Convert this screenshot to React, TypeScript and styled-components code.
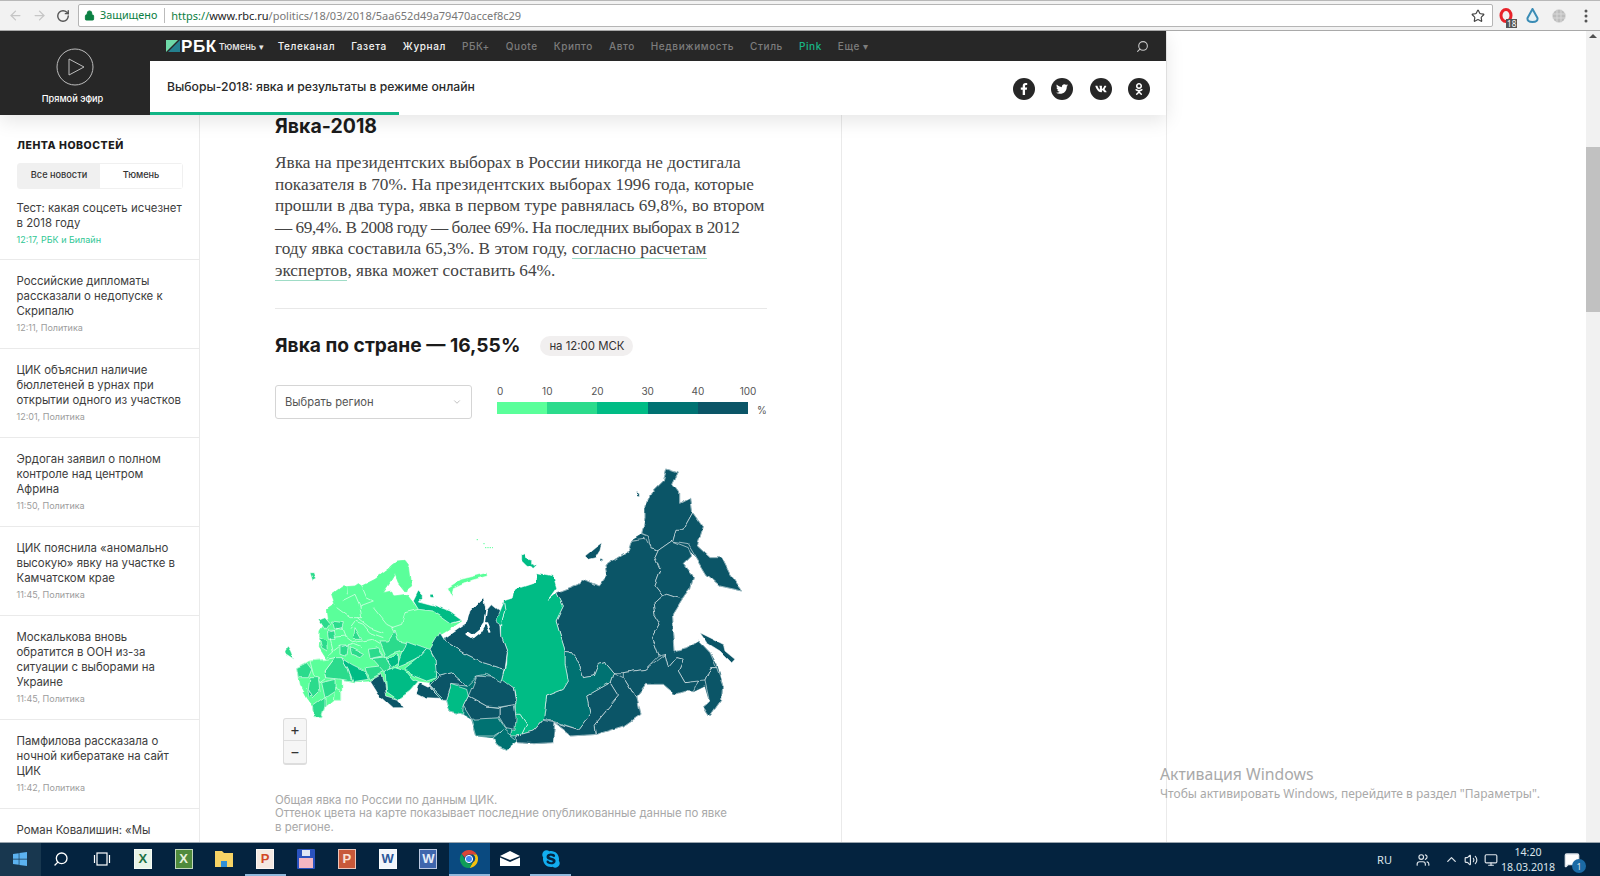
import styled, { createGlobalStyle } from "styled-components";
import { ArrowLeft, ArrowRight, RotateCw, Lock, Star, Search, ChevronDown, ChevronUp, Users, Volume2, Monitor, MessageSquare } from "lucide-react";
import { FaFacebookF, FaTwitter, FaVk, FaOdnoklassniki, FaWindows, FaSkype } from "react-icons/fa";

const SANS = `Inter, "Liberation Sans", sans-serif`;
const UI = `"Noto Sans", "Open Sans", sans-serif`;
const PALETTE = ["#5aff9a", "#2bdb8c", "#00bc85", "#007272", "#0b5567"];

const GlobalStyle = createGlobalStyle`
  html, body { margin: 0; padding: 0; background: #fff; }
  * { box-sizing: border-box; }
`;

const Screen = styled.div`
  width: 1600px;
  height: 876px;
  display: flex;
  flex-direction: column;
  overflow: hidden;
  position: relative;
  font-family: ${SANS};
`;

/* browser toolbar */
const BrowserBar = styled.div`
  height: 31px;
  flex: none;
  display: flex;
  align-items: center;
  background: #f2f2f2;
  border-top: 1px solid #b8b8b8;
  border-bottom: 1px solid #a9a9a9;
  padding: 0 1px 0 3px;
  color: #5a5a5a;
`;

const NavButton = styled.span<{ $dim?: boolean }>`
  width: 24px;
  display: flex;
  justify-content: center;
  color: ${(p) => (p.$dim ? "#c6c6c6" : "#555")};
`;

const Omnibox = styled.div`
  flex: 1;
  height: 23px;
  margin-left: 3px;
  background: #fff;
  border: 1px solid #b5b5b5;
  border-radius: 2px;
  display: flex;
  align-items: center;
  padding: 0 7px 0 5px;
  font: 10.8px/1 ${UI};
  white-space: nowrap;
`;

const Secure = styled.span`
  color: #0b8043;
  margin-left: 5px;
`;

const Divider = styled.span`
  width: 1px;
  height: 15px;
  background: #bbb;
  margin: 0 6px 0 7px;
`;

const Url = styled.span`
  flex: 1;
  color: #777;
  font-size: 11px;
  b { font-weight: 400; color: #0b8043; }
  i { font-style: normal; color: #222; }
`;

const Extension = styled.span`
  width: 26.6px;
  height: 18px;
  display: flex;
  justify-content: center;
  align-items: center;
  position: relative;
`;

const ExtBadge = styled.span`
  position: absolute;
  right: 2px;
  bottom: -3px;
  background: #555;
  color: #fff;
  font: 8px/9px ${UI};
  padding: 0 1px;
`;

/* page body and its scrollbar */
const Viewport = styled.div`
  flex: 1;
  min-height: 0;
  display: flex;
`;

const Page = styled.div`
  flex: 1;
  min-width: 0;
  overflow: hidden;
`;

const Scrollbar = styled.div`
  width: 14px;
  flex: none;
  background: #f1f1f1;
  display: flex;
  flex-direction: column;
  align-items: center;
  padding-top: 3px;
  color: #505050;
`;

const ScrollArrow = styled.span`
  width: 0;
  height: 0;
  border: 4px solid transparent;
  border-top: 0;
  border-bottom: 4px solid #505050;
`;

const Thumb = styled.div`
  width: 100%;
  height: 165px;
  margin-top: 109px;
  background: #c1c1c1;
`;

const Column = styled.div`
  width: 1167px;
  height: 100%;
  display: flex;
  flex-direction: column;
  border-right: 1px solid #eaeaea;
`;

const Header = styled.header`
  height: 84px;
  flex: none;
  display: flex;
  position: relative;
  z-index: 2;
  box-shadow: 0 6px 18px rgba(0, 0, 0, 0.1);
`;

const LiveBlock = styled.div`
  width: 150px;
  flex: none;
  background: #272727;
  color: #fff;
  display: flex;
  flex-direction: column;
  align-items: center;
  padding: 17px 1px 0 0;
  font-size: 9.2px;
  font-weight: 500;
  gap: 7px;
`;

const LiveLabel = styled.span`
  margin-right: 4px;
`;

const HeaderMain = styled.div`
  flex: 1;
  display: flex;
  flex-direction: column;
`;

const TopNav = styled.nav`
  height: 30px;
  background: #272727;
  display: flex;
  align-items: center;
  padding: 0 17px 0 16px;
  font-size: 10px;
  letter-spacing: 0.6px;
  white-space: nowrap;
`;

const Logo = styled.span`
  display: flex;
  align-items: center;
  gap: 1px;
  color: #fff;
  font: 700 17px/1 "Liberation Sans", sans-serif;
  margin-right: 2px;
`;

const NavItem = styled.a<{ $tone?: "main" | "muted" | "pink" }>`
  margin-right: 16px;
  font-weight: 500;
  color: ${(p) => (p.$tone === "main" ? "#f2f2f2" : p.$tone === "pink" ? "#18b887" : "#7d7d7d")};
`;

const City = styled.span`
  color: #e8e8e8;
  font-size: 9.4px;
  letter-spacing: 0;
  font-weight: 500;
  margin-right: 14px;
`;

const NavSearch = styled.span`
  margin-left: auto;
  color: #c8c8c8;
  display: flex;
  transform: scaleX(-1);
`;

const SubBar = styled.div`
  flex: 1;
  background: #fff;
  display: flex;
  align-items: center;
  justify-content: space-between;
  padding: 0 16px 0 17px;
  position: relative;
  font-size: 12.2px;
  font-weight: 500;
  color: #2a2a2a;
`;

const SubTitle = styled.span`
  margin-bottom: 3px;
`;

const Progress = styled.span`
  position: absolute;
  left: 0;
  bottom: 0;
  width: 249px;
  height: 3px;
  background: #10b585;
`;

const Socials = styled.div`
  display: flex;
  gap: 16.5px;
  margin-top: 1px;
`;

const SocialIcon = styled.span`
  width: 22px;
  height: 22px;
  border-radius: 50%;
  background: #272727;
  color: #fff;
  display: flex;
  align-items: center;
  justify-content: center;
  font-size: 12px;
`;

const Body = styled.div`
  flex: 1;
  min-height: 0;
  display: flex;
  overflow: hidden;
`;

/* news feed */
const Feed = styled.aside`
  width: 200px;
  flex: none;
  border-right: 1px solid #eaeaea;
  padding-top: 24px;
  overflow: hidden;
`;

const FeedTitle = styled.div`
  font-size: 10.5px;
  font-weight: 800;
  letter-spacing: 0.55px;
  line-height: 13px;
  color: #1c1c1c;
  padding-left: 17px;
`;

const Tabs = styled.div`
  display: flex;
  margin: 11px 0 0 17px;
  width: 166px;
  height: 26px;
  border: 1px solid #f0f0f0;
  border-radius: 3px;
  font-size: 9.2px;
  font-weight: 500;
  color: #333;
`;

const Tab = styled.span<{ $active?: boolean }>`
  width: 50%;
  display: flex;
  align-items: center;
  justify-content: center;
  padding-bottom: 3px;
  background: ${(p) => (p.$active ? "#f0f0f0" : "#fff")};
`;

const NewsItem = styled.div<{ $first?: boolean }>`
  padding: ${(p) => (p.$first ? "12px 8px 13px" : "14px 8px 14px")} 16.5px;
  padding-right: 8px;
  border-bottom: 1px solid #eaeaea;
  font-size: 11.4px;
  line-height: 15px;
  color: #3d3d3d;
`;

const NewsLine = styled.span`
  display: block;
  white-space: nowrap;
`;

const NewsMeta = styled.div<{ $accent?: boolean }>`
  font-size: 9px;
  line-height: 12px;
  margin-top: 3px;
  color: ${(p) => (p.$accent ? "#30c795" : "#9c9c9c")};
`;

/* article */
const Article = styled.main`
  width: 642px;
  flex: none;
  border-right: 1px solid #eaeaea;
  padding: 0 74px 0 75px;
`;

const SectionTitle = styled.h2`
  margin: 0;
  padding-top: 1px;
  font-size: 19.5px;
  line-height: 21px;
  font-weight: 700;
  color: #1b1b1b;
`;

const Lead = styled.p`
  margin: 15px 0 0;
  font: 17.25px/21.6px "Liberation Serif", serif;
  color: #444;
  white-space: nowrap;
  padding-bottom: 26px;
  border-bottom: 1px solid #e8e8e8;
  a { color: inherit; border-bottom: 1px solid #9fdcc6; }
`;

const LeadLine = styled.span<{ $tracking?: number }>`
  display: block;
  letter-spacing: ${(p) => p.$tracking ?? 0}px;
`;

const TurnoutRow = styled.div`
  display: flex;
  align-items: center;
  margin-top: 24.5px;
  gap: 20px;
`;

const TurnoutTitle = styled.h3`
  margin: 0;
  font-size: 19.2px;
  line-height: 24px;
  font-weight: 700;
  color: #1b1b1b;
  white-space: nowrap;
`;

const TimePill = styled.span`
  height: 20px;
  margin-top: 2px;
  padding: 0 9px;
  border-radius: 10px;
  background: #f1efef;
  color: #333;
  display: flex;
  align-items: center;
  font-size: 11.4px;
`;

const Controls = styled.div`
  display: flex;
  align-items: flex-start;
  margin-top: 27.5px;
  gap: 25px;
`;

const RegionSelect = styled.div`
  width: 197px;
  flex: none;
  height: 34px;
  border: 1px solid #d5d5d5;
  border-radius: 3px;
  display: flex;
  align-items: center;
  justify-content: space-between;
  padding: 0 9px;
  font-size: 11.2px;
  color: #555;
`;

const Legend = styled.div`
  width: 270px;
  flex: none;
  display: grid;
  grid-template-columns: repeat(5, 50.2px) 1fr;
  grid-template-rows: 17px 12px;
  font-size: 10px;
  color: #555;
  line-height: 12px;
`;

const LegendTicks = styled.div`
  grid-column: 1 / 7;
  display: flex;
  white-space: nowrap;
  margin-left: -25px;
`;

const LegendTick = styled.span<{ $first?: boolean }>`
  width: 50.2px;
  flex: none;
  text-align: ${(p) => (p.$first ? "right" : "center")};
  padding-right: ${(p) => (p.$first ? "19px" : "0")};
`;

const LegendSwatch = styled.span<{ $level: number }>`
  background: ${(p) => PALETTE[p.$level]};
`;

const LegendUnit = styled.span`
  padding-left: 9px;
  padding-top: 2px;
`;

const MapBox = styled.div`
  margin: 32px 0 0 -5px;
  width: 500px;
  height: 320px;
  position: relative;
`;

const RegionShape = styled.path<{ $level: number; $flat?: boolean }>`
  fill: ${(p) => PALETTE[p.$level]};
  stroke: ${(p) => (p.$flat ? PALETTE[p.$level] : "rgba(255, 255, 255, 0.78)")};
  stroke-width: 2.2;
  stroke-linejoin: round;
`;

const Zoom = styled.div`
  position: absolute;
  left: 13px;
  top: 267px;
  width: 24px;
  height: 47px;
  border: 1px solid #ddd;
  border-bottom-width: 2px;
  border-radius: 3px;
  background: #f6f6f6;
  display: flex;
  flex-direction: column;
  font: 15px/1 ${SANS};
  color: #333;
`;

const ZoomStep = styled.span`
  flex: 1;
  display: flex;
  align-items: center;
  justify-content: center;
  & + & { border-top: 1px solid #ddd; }
`;

const Caption = styled.p`
  margin: 23.5px 0 0;
  font-size: 11.43px;
  line-height: 13.4px;
  color: #a8a8a8;
  white-space: nowrap;
`;

/* system overlay and taskbar */
const Watermark = styled.div`
  position: absolute;
  left: 1160px;
  top: 764px;
  font: 12px/20px ${UI};
  color: #a9a9a9;
  white-space: nowrap;
  pointer-events: none;
  span { display: block; font-size: 15.8px; line-height: 20px; }
`;

const Taskbar = styled.footer`
  height: 34px;
  flex: none;
  background: #04233f;
  border-top: 1px solid #9aa5ae;
  display: flex;
  align-items: stretch;
  color: #fff;
`;

const TaskTile = styled.span<{ $start?: boolean; $active?: boolean; $open?: boolean }>`
  width: 40.8px;
  display: flex;
  align-items: center;
  justify-content: center;
  background: ${(p) => (p.$start ? "#18374f" : p.$active ? "#0a4a80" : "transparent")};
  border-bottom: 2px solid ${(p) => (p.$active || p.$open ? "#8fb8dc" : "transparent")};
`;

const DocIcon = styled.span<{ $bg: string; $fg?: string }>`
  width: 18px;
  height: 20px;
  background: ${(p) => p.$bg};
  color: ${(p) => p.$fg ?? "#fff"};
  display: flex;
  align-items: center;
  justify-content: center;
  font: 700 13px/1 "Liberation Sans", sans-serif;
  border: 1px solid rgba(255, 255, 255, 0.65);
`;

const Tray = styled.div`
  margin-left: auto;
  display: flex;
  align-items: center;
  font: 11px/1 ${UI};
  color: #dde4ea;
`;

const TrayLabel = styled.span`
  margin-right: 21px;
`;

const TraySlot = styled.span<{ $gap?: boolean }>`
  width: 20px;
  display: flex;
  justify-content: center;
  margin-left: ${(p) => (p.$gap ? "8px" : "0")};
`;

const Clock = styled.div`
  width: 54px;
  text-align: center;
  font-size: 10.6px;
  line-height: 15px;
`;

const Notify = styled.span`
  width: 34px;
  height: 100%;
  display: flex;
  align-items: center;
  justify-content: center;
  position: relative;
  margin-right: 11px;
`;

const NotifyCount = styled.span`
  position: absolute;
  right: 3px;
  bottom: 3px;
  width: 14px;
  height: 14px;
  border-radius: 50%;
  background: #1b6aa5;
  font-size: 9px;
  display: flex;
  align-items: center;
  justify-content: center;
`;

const news: { lines: string[]; meta?: string }[] = [
  { lines: ["Российские дипломаты", "рассказали о недопуске к", "Скрипалю"], meta: "12:11, Политика" },
  { lines: ["ЦИК объяснил наличие", "бюллетеней в урнах при", "открытии одного из участков"], meta: "12:01, Политика" },
  { lines: ["Эрдоган заявил о полном", "контроле над центром", "Африна"], meta: "11:50, Политика" },
  { lines: ["ЦИК пояснила «аномально", "высокую» явку на участке в", "Камчатском крае"], meta: "11:45, Политика" },
  { lines: ["Москалькова вновь", "обратится в ООН из-за", "ситуации с выборами на", "Украине"], meta: "11:45, Политика" },
  { lines: ["Памфилова рассказала о", "ночной кибератаке на сайт", "ЦИК"], meta: "11:42, Политика" },
  { lines: ["Роман Ковалишин: «Мы"] },
];

const navItems: { label: string; tone: "main" | "muted" | "pink" }[] = [
  { label: "Телеканал", tone: "main" },
  { label: "Газета", tone: "main" },
  { label: "Журнал", tone: "main" },
  { label: "РБК+", tone: "muted" },
  { label: "Quote", tone: "muted" },
  { label: "Крипто", tone: "muted" },
  { label: "Авто", tone: "muted" },
  { label: "Недвижимость", tone: "muted" },
  { label: "Стиль", tone: "muted" },
  { label: "Pink", tone: "pink" },
  { label: "Еще ▾", tone: "muted" },
];

// solid land under the subjects so that no seams show between them
const landmass: [number, string][] = [
  [4, "M860,425 L925,400 L940,385 L985,405 L1010,372 L1005,345 L1040,322 L1075,300 L1085,268 L1115,250 L1125,200 L1125,165 L1150,120 L1180,90 L1190,54 L1225,66 L1208,100 L1226,125 L1226,160 L1262,142 L1268,185 L1300,230 L1282,285 L1320,320 L1355,320 L1380,370 L1418,420 L1350,405 L1310,370 L1280,320 L1255,290 L1265,315 L1240,340 L1270,380 L1262,410 L1235,445 L1207,490 L1215,600 L1250,590 L1285,568 L1320,605 L1340,640 L1358,700 L1355,745 L1320,795 L1300,765 L1318,750 L1305,705 L1270,722 L1250,720 L1215,730 L1180,700 L1130,700 L1098,740 L1110,790 L1060,825 L980,850 L905,855 L855,815 L848,875 L790,878 L745,875 L735,855 L790,840 L885,640 Z"],
  [3, "M480,595 L525,560 L700,560 L700,700 L738,745 L740,870 L710,895 L680,880 L670,860 L620,855 L605,805 L578,790 L540,780 L530,745 L510,742 L480,705 Z"],
  [0, "M185,430 L215,408 L255,405 L265,398 L275,405 L315,385 L360,352 L365,345 L385,330 L405,328 L418,345 L425,405 L405,420 L385,395 L375,370 L360,395 L340,425 L365,420 L372,435 L410,430 L445,475 L490,480 L540,515 L575,510 L530,540 L505,555 L480,595 L495,625 L500,680 L485,695 L445,690 L420,720 L385,745 L350,735 L345,700 L335,670 L300,690 L250,692 L215,685 L215,745 L190,745 L165,765 L155,800 L135,800 L130,765 L110,740 L88,700 L80,650 L110,635 L120,630 L170,625 L148,590 L150,540 L175,500 L172,475 L195,460 Z"],
];

// federal subjects, the first value is the turnout band
const regions: [number, string][] = [
  // far east
  [4, "M860,425 L925,400 L940,385 L985,405 L1010,372 L1005,345 L1040,322 L1075,300 L1085,268 L1125,262 L1140,290 L1165,298 L1155,320 L1172,360 L1155,405 L1178,435 L1150,460 L1155,490 L1170,515 L1145,560 L1165,615 L1125,655 L1060,665 L1030,665 L1005,635 L985,640 L970,675 L940,680 L925,630 L900,600 L885,598 L870,550 L858,510 L880,465 Z"],
  [4, "M1190,54 L1225,66 L1208,100 L1226,125 L1226,160 L1262,142 L1268,185 L1240,235 L1215,235 L1205,270 L1165,298 L1140,290 L1135,258 L1115,250 L1125,200 L1125,165 L1150,120 L1180,90 Z"],
  [4, "M1268,185 L1300,230 L1282,285 L1320,320 L1355,320 L1380,370 L1418,420 L1350,405 L1310,370 L1280,320 L1255,278 L1205,270 L1215,235 L1240,235 Z"],
  [4, "M1205,270 L1255,290 L1265,315 L1240,340 L1270,380 L1262,410 L1235,445 L1190,430 L1178,435 L1155,405 L1172,360 L1155,320 L1165,298 Z"],
  [4, "M1178,435 L1190,430 L1235,445 L1207,490 L1215,600 L1250,590 L1285,568 L1320,605 L1340,650 L1322,650 L1305,690 L1245,695 L1225,660 L1240,625 L1220,620 L1195,650 L1185,610 L1165,615 L1145,560 L1170,515 L1155,490 L1150,460 Z"],
  [4, "M1322,650 L1340,650 L1358,700 L1355,745 L1320,795 L1300,765 L1318,750 L1305,690 Z"],
  [4, "M1060,665 L1125,655 L1185,610 L1195,650 L1220,620 L1240,625 L1225,660 L1245,695 L1285,690 L1270,722 L1250,720 L1215,730 L1180,700 L1130,700 L1098,740 L1060,680 Z"],
  [4, "M1030,665 L1060,680 L1098,740 L1110,790 L1060,825 L980,850 L975,820 L1045,735 L1020,695 Z"],
  [4, "M950,735 L1020,695 L1045,735 L975,820 L978,850 L905,855 L855,815 L925,835 L960,790 Z"],
  [3, "M885,598 L900,600 L925,630 L940,680 L970,675 L985,640 L1005,635 L1030,665 L1020,695 L950,735 L960,790 L925,835 L855,812 L820,805 L830,735 L880,715 L895,690 L885,640 Z"],
  [4, "M1290,545 L1360,580 L1365,600 L1395,625 L1385,635 L1350,600 L1310,575 Z"],
  [4, "M1100,120 L1108,125 L1108,138 L1100,135 Z"],
  [4, "M945,315 L975,290 L995,275 L990,295 L975,320 L955,325 Z"],
  [4, "M990,322 L1000,325 L990,332 Z"],
  // siberia
  [2, "M700,450 L730,440 L735,415 L795,395 L800,365 L850,375 L860,410 L835,445 L860,425 L880,465 L858,510 L870,550 L885,598 L885,640 L895,690 L880,715 L830,735 L820,805 L790,840 L755,850 L770,820 L750,790 L735,790 L738,745 L730,710 L695,695 L710,640 L712,605 L695,560 L695,510 L705,480 Z"],
  [2, "M755,310 L765,305 L770,320 L785,325 L785,340 L800,345 L790,355 L770,345 L755,330 Z"],
  [4, "M735,855 L790,840 L820,808 L855,815 L848,875 L790,878 L745,875 Z"],
  [2, "M735,790 L750,790 L770,820 L755,850 L722,852 Z"],
  [3, "M605,800 L685,800 L708,832 L670,855 L620,855 Z"],
  [3, "M670,860 L700,835 L742,870 L710,895 L680,880 Z"],
  [4, "M690,770 L732,760 L738,800 L735,835 L708,830 L690,800 Z"],
  [4, "M595,735 L650,765 L690,770 L690,800 L605,805 L580,765 Z"],
  [4, "M620,675 L690,680 L730,710 L738,760 L690,768 L650,765 L595,735 L610,700 Z"],
  [2, "M545,700 L590,715 L595,735 L580,765 L578,790 L540,780 L530,745 Z"],
  [4, "M480,705 L510,675 L545,665 L590,705 L545,700 L530,745 L520,745 Z"],
  [3, "M480,595 L510,545 L525,570 L590,610 L640,635 L705,655 L695,695 L650,670 L620,675 L590,705 L545,665 L510,675 L495,660 L495,620 Z"],
  [4, "M525,560 L590,515 L600,480 L640,440 L648,480 L665,460 L690,480 L695,560 L712,605 L705,655 L640,635 L590,610 L525,570 Z"],
  [2, "M675,510 L700,450 L705,480 L695,510 L695,525 Z"],
  // north of the european part
  [2, "M430,450 L445,420 L458,435 L445,450 L490,462 L540,480 L575,505 L540,515 L490,480 L445,475 Z"],
  [0, "M530,410 L570,385 L650,365 L652,375 L590,392 L550,410 L545,440 Z"],
  [2, "M480,430 L492,430 L490,440 L480,438 Z"],
  [1, "M120,365 L130,365 L137,385 L128,390 Z"],
  // volga and urals
  [2, "M410,570 L470,592 L445,620 L405,640 L380,650 L392,615 Z"],
  [2, "M470,592 L480,595 L495,625 L500,680 L470,690 L420,670 L405,652 L445,620 Z"],
  [2, "M345,660 L375,650 L405,660 L425,685 L445,690 L420,720 L385,745 L350,720 Z"],
  [4, "M300,690 L335,670 L345,700 L350,735 L385,745 L398,770 L370,770 L325,730 Z"],
  [4, "M450,695 L480,710 L510,742 L470,740 L440,725 Z"],
  [2, "M215,620 L245,640 L285,660 L295,685 L250,692 L235,655 Z"],
  [1, "M195,620 L215,620 L235,655 L245,690 L215,685 L170,680 L165,660 Z"],
  [1, "M285,650 L330,645 L345,660 L300,685 Z"],
  [1, "M305,620 L345,615 L365,650 L345,665 Z"],
  [1, "M330,570 L355,570 L375,540 L385,570 L410,575 L400,600 L365,610 L350,620 Z"],
  [2, "M350,625 L385,610 L385,635 L365,650 Z"],
  // south
  [1, "M80,650 L110,635 L125,655 L115,680 L85,680 Z"],
  [0, "M120,630 L170,625 L195,620 L165,660 L170,680 L150,695 L130,670 Z"],
  [1, "M120,680 L145,680 L150,720 L130,740 L115,715 Z"],
  [1, "M155,695 L195,685 L195,720 L165,740 Z"],
  [0, "M195,710 L215,720 L215,745 L190,745 Z"],
  [1, "M130,765 L165,740 L165,765 L155,800 L135,800 Z"],
  [1, "M45,600 L55,585 L65,600 L75,625 L45,605 Z"],
  [2, "M110,715 L125,730 L115,740 Z"],
  // centre
  [1, "M145,505 L165,497 L180,515 L165,535 Z"],
  [1, "M185,510 L220,515 L215,535 L190,530 Z"],
  [1, "M172,535 L190,535 L195,565 L175,565 Z"],
  [1, "M147,560 L170,570 L172,600 L155,590 Z"],
  [1, "M255,530 L275,565 L250,565 Z"],
  [1, "M210,585 L235,585 L230,615 L210,610 Z"],
  [1, "M240,590 L280,610 L270,620 L245,610 Z"],
  [1, "M295,595 L325,590 L340,612 L300,620 Z"],
];

// inner borders across the north-west, all one turnout band
const borders = [
  "M215,450 L255,430 L270,465 L310,450",
  "M200,470 L240,500 L262,500 L300,530 L340,545",
  "M310,470 L350,520 L370,530",
  "M270,465 L275,500 L262,500",
  "M230,405 L232,430",
  "M275,405 L290,440 L310,450",
  "M405,485 L395,520 L365,530 L375,550",
  "M445,475 L405,485",
  "M175,540 L215,530 L225,555 L180,560 L190,600 L170,620",
  "M240,530 L255,510 L280,520 L300,545 L340,560",
  "M225,555 L250,575 L305,565 L330,580",
  "M215,590 L250,580 L275,590",
  "M190,600 L210,585",
];

const ChromeIcon = () => (
  <svg width="20" height="20" viewBox="0 0 20 20">
    <path d="M10 1a9 9 0 0 1 7.8 4.5H10a4.5 4.5 0 0 0-4.2 3L2.6 4.8A9 9 0 0 1 10 1z" fill="#db4437" />
    <path d="M17.8 5.5A9 9 0 0 1 10.6 19l3.3-5.6a4.5 4.5 0 0 0 .1-7.9z" fill="#f4c20d" />
    <path d="M2.6 4.8l3.9 6.9a4.5 4.5 0 0 0 6.6 2L10.6 19A9 9 0 0 1 2.6 4.8z" fill="#0f9d58" />
    <circle cx="10" cy="10" r="3.6" fill="#4285f4" stroke="#fff" strokeWidth="1" />
  </svg>
);

const App = () => {
  return (
    <Screen>
      <GlobalStyle />
      <BrowserBar>
        <NavButton $dim><ArrowLeft size={15} /></NavButton>
        <NavButton $dim><ArrowRight size={15} /></NavButton>
        <NavButton><RotateCw size={14} strokeWidth={2.4} /></NavButton>
        <Omnibox>
          <Lock size={11} color="#0b8043" fill="#0b8043" />
          <Secure>Защищено</Secure>
          <Divider />
          <Url><b>https://</b><i>www.rbc.ru</i>/politics/18/03/2018/5aa652d49a79470accef8c29</Url>
          <Star size={14} color="#444" />
        </Omnibox>
        <Extension>
          <svg width="14" height="15" viewBox="0 0 14 15"><ellipse cx="7" cy="7.5" rx="5" ry="6" fill="none" stroke="#e8232a" strokeWidth="3" /></svg>
          <ExtBadge>18</ExtBadge>
        </Extension>
        <Extension>
          <svg width="15" height="16" viewBox="0 0 15 16"><path d="M7.5 1 L12.5 10 Q13 14 7.5 14 Q2 14 2.5 10 Z" fill="#e6f0f4" stroke="#3a8cb5" strokeWidth="2" /></svg>
        </Extension>
        <Extension>
          <svg width="14" height="14" viewBox="0 0 14 14" fill="none">
            <circle cx="7" cy="7" r="6.5" fill="#bdbdbd" />
            <path d="M0.5 5h13M0.5 9h13M5 0.5v13M9 0.5v13" stroke="#d8d8d8" />
          </svg>
        </Extension>
        <Extension>
          <svg width="4" height="14" viewBox="0 0 4 14" fill="#555"><circle cx="2" cy="2" r="1.5" /><circle cx="2" cy="7" r="1.5" /><circle cx="2" cy="12" r="1.5" /></svg>
        </Extension>
      </BrowserBar>

      <Viewport>
        <Page>
          <Column>
            <Header>
              <LiveBlock>
                <svg width="38" height="38" viewBox="0 0 38 38" fill="none" stroke="#bdbdbd" strokeWidth="1">
                  <circle cx="19" cy="19" r="18" />
                  <path d="M13 11 L28 19 L13 27 Z" />
                </svg>
                <LiveLabel>Прямой эфир</LiveLabel>
              </LiveBlock>
              <HeaderMain>
                <TopNav>
                  <Logo>
                    <svg width="14" height="12" viewBox="0 0 14 12">
                      <path d="M0 0 H12 L0 12 Z" fill="#6fd9a8" />
                      <path d="M14 0 V12 H2 Z" fill="#24808f" />
                    </svg>
                    РБК
                  </Logo>
                  <City>Тюмень ▾</City>
                  {navItems.map((item) => (
                    <NavItem key={item.label} $tone={item.tone}>{item.label}</NavItem>
                  ))}
                  <NavSearch><Search size={13} /></NavSearch>
                </TopNav>
                <SubBar>
                  <SubTitle>Выборы-2018: явка и результаты в режиме онлайн</SubTitle>
                  <Socials>
                    <SocialIcon><FaFacebookF /></SocialIcon>
                    <SocialIcon><FaTwitter /></SocialIcon>
                    <SocialIcon><FaVk /></SocialIcon>
                    <SocialIcon><FaOdnoklassniki /></SocialIcon>
                  </Socials>
                  <Progress />
                </SubBar>
              </HeaderMain>
            </Header>

            <Body>
              <Feed>
                <FeedTitle>ЛЕНТА НОВОСТЕЙ</FeedTitle>
                <Tabs>
                  <Tab $active>Все новости</Tab>
                  <Tab>Тюмень</Tab>
                </Tabs>
                <NewsItem $first>
                  <NewsLine>Тест: какая соцсеть исчезнет</NewsLine>
                  <NewsLine>в 2018 году</NewsLine>
                  <NewsMeta $accent>12:17, РБК и Билайн</NewsMeta>
                </NewsItem>
                {news.map((item) => (
                  <NewsItem key={item.lines[0]}>
                    {item.lines.map((line) => (
                      <NewsLine key={line}>{line}</NewsLine>
                    ))}
                    {item.meta && <NewsMeta>{item.meta}</NewsMeta>}
                  </NewsItem>
                ))}
              </Feed>

              <Article>
                <SectionTitle>Явка-2018</SectionTitle>
                <Lead>
                  <LeadLine>Явка на президентских выборах в России никогда не достигала</LeadLine>
                  <LeadLine>показателя в 70%. На президентских выборах 1996 года, которые</LeadLine>
                  <LeadLine>прошли в два тура, явка в первом туре равнялась 69,8%, во втором</LeadLine>
                  <LeadLine $tracking={-0.47}>— 69,4%. В 2008 году — более 69%. На последних выборах в 2012</LeadLine>
                  <LeadLine>году явка составила 65,3%. В этом году, <a>согласно расчетам</a></LeadLine>
                  <LeadLine><a>экспертов</a>, явка может составить 64%.</LeadLine>
                </Lead>

                <TurnoutRow>
                  <TurnoutTitle>Явка по стране — 16,55%</TurnoutTitle>
                  <TimePill>на 12:00 МСК</TimePill>
                </TurnoutRow>

                <Controls>
                  <RegionSelect>
                    Выбрать регион
                    <ChevronDown size={10} color="#b5b5b5" />
                  </RegionSelect>
                  <Legend>
                    <LegendTicks>
                      {["0", "10", "20", "30", "40", "100"].map((tick, i) => (
                        <LegendTick key={tick} $first={i === 0}>{tick}</LegendTick>
                      ))}
                    </LegendTicks>
                    {PALETTE.map((_, level) => (
                      <LegendSwatch key={level} $level={level} />
                    ))}
                    <LegendUnit>%</LegendUnit>
                  </Legend>
                </Controls>

                <MapBox>
                  <svg width="500" height="320" viewBox="0 0 1500 960">
                    <defs>
                      {/* roughens the hand-plotted outlines into a coastline */}
                      <filter id="coast" filterUnits="userSpaceOnUse" x="0" y="0" width="1500" height="960" colorInterpolationFilters="sRGB">
                        <feTurbulence type="fractalNoise" baseFrequency="0.025" numOctaves="2" seed="4" />
                        <feDisplacementMap in="SourceGraphic" scale="13" xChannelSelector="R" yChannelSelector="G" />
                      </filter>
                    </defs>
                    <g filter="url(#coast)">
                      {landmass.map(([level, d]) => (
                        <RegionShape key={d} $level={level} $flat d={d} />
                      ))}
                      {regions.map(([level, d]) => (
                        <RegionShape key={d} $level={level} d={d} />
                      ))}
                      <path d={borders.join(" ")} fill="none" stroke="#fff" strokeOpacity="0.8" strokeWidth="2.2" />
                      <path d="M592,548 L608,558 L630,540 L642,520" fill="none" stroke="#fff" strokeWidth="11" strokeLinecap="round" />
                      <path d="M642,520 L652,520 L662,545" fill="none" stroke="#fff" strokeWidth="6" />
                      <path d="M642,520 L648,480 L655,445" fill="none" stroke="#fff" strokeWidth="5" />
                    </g>
                    <path d="M620,266h6M640,278h6M645,290h24" stroke="#5aff9a" strokeWidth="3" strokeDasharray="4 3" />
                  </svg>
                  <Zoom>
                    <ZoomStep>+</ZoomStep>
                    <ZoomStep>−</ZoomStep>
                  </Zoom>
                </MapBox>

                <Caption>
                  Общая явка по России по данным ЦИК.
                  <br />
                  Оттенок цвета на карте показывает последние опубликованные данные по явке
                  <br />
                  в регионе.
                </Caption>
              </Article>
            </Body>
          </Column>
        </Page>
        <Scrollbar>
          <ScrollArrow />
          <Thumb />
        </Scrollbar>
      </Viewport>

      <Taskbar>
        <TaskTile $start><FaWindows size={16} color="#5cb2f0" /></TaskTile>
        <TaskTile><Search size={16} style={{ transform: "scaleX(-1)" }} /></TaskTile>
        <TaskTile>
          <svg width="18" height="14" viewBox="0 0 18 14" fill="none" stroke="#fff" strokeWidth="1.2">
            <rect x="4" y="1" width="10" height="12" /><path d="M1.5 3v8M16.5 3v8" />
          </svg>
        </TaskTile>
        <TaskTile><DocIcon $bg="#e8f4e8" $fg="#207245">X</DocIcon></TaskTile>
        <TaskTile><DocIcon $bg="#4f8a3c" $fg="#e6f2dc">X</DocIcon></TaskTile>
        <TaskTile>
          <svg width="18" height="17" viewBox="0 0 18 17">
            <path d="M0 1h7l2 2h9v14H0z" fill="#f6d365" /><rect x="6" y="11" width="6" height="6" fill="#2f8fd8" />
          </svg>
        </TaskTile>
        <TaskTile $open><DocIcon $bg="#f4e9e2" $fg="#d24726">P</DocIcon></TaskTile>
        <TaskTile>
          <svg width="18" height="20" viewBox="0 0 18 20">
            <rect width="18" height="20" rx="1" fill="#2a52be" /><rect x="2" y="9" width="14" height="10" fill="#f4b6c2" /><rect x="5" y="1" width="8" height="6" fill="#dfe6f5" />
          </svg>
        </TaskTile>
        <TaskTile><DocIcon $bg="#c8593a" $fg="#fbe2d4">P</DocIcon></TaskTile>
        <TaskTile><DocIcon $bg="#f1f5fb" $fg="#2b579a">W</DocIcon></TaskTile>
        <TaskTile><DocIcon $bg="#3f66ad" $fg="#e4ecf8">W</DocIcon></TaskTile>
        <TaskTile $active><ChromeIcon /></TaskTile>
        <TaskTile>
          <svg width="20" height="15" viewBox="0 0 20 15">
            <path d="M0 5 L10 0 L20 5 L10 9 Z" fill="#fff" /><path d="M0 6.5 L10 11 L20 6.5 V15 H0 Z" fill="#fff" />
          </svg>
        </TaskTile>
        <TaskTile $open><FaSkype size={20} color="#12aef0" /></TaskTile>
        <Tray>
          <TrayLabel>RU</TrayLabel>
          <TraySlot><Users size={14} /></TraySlot>
          <TraySlot $gap><ChevronUp size={15} /></TraySlot>
          <TraySlot><Volume2 size={14} /></TraySlot>
          <TraySlot><Monitor size={14} /></TraySlot>
          <Clock>14:20<br />18.03.2018</Clock>
          <Notify>
            <MessageSquare size={16} fill="#fff" />
            <NotifyCount>1</NotifyCount>
          </Notify>
        </Tray>
      </Taskbar>

      <Watermark>
        <span>Активация Windows</span>
        Чтобы активировать Windows, перейдите в раздел "Параметры".
      </Watermark>
    </Screen>
  );
};

export default App;
